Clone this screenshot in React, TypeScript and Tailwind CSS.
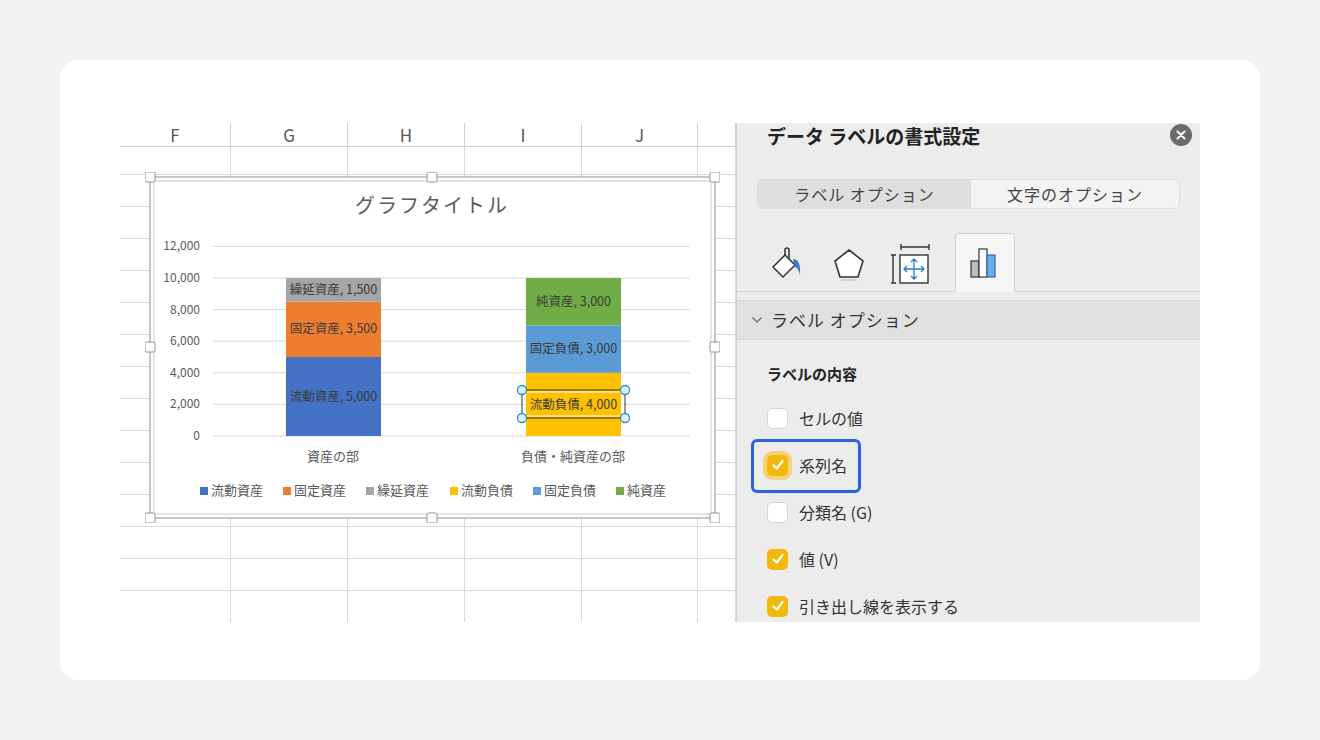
import React from "react";

const cols = [111, 117, 117, 117, 116, 38];
const colNames = ["F", "G", "H", "I", "J", ""];

function Check({ on, glow }: { on: boolean; glow?: boolean }) {
  return (
    <div className={`w-[21px] h-[21px] rounded-[5px] flex items-center justify-center ${on ? "bg-[#f2b80c]" : "bg-white border border-[#d6d6d6]"} ${glow ? "ring-4 ring-[#f5d27a]" : ""}`}>
      {on && (
        <svg width="14" height="14" viewBox="0 0 14 14"><path d="M2.5 7.5 L5.8 10.5 L11.5 3" stroke="white" strokeWidth="2.2" fill="none" strokeLinecap="round" strokeLinejoin="round" /></svg>
      )}
    </div>
  );
}

function Chart() {
  const y0 = 259;
  const s = 0.0158;
  const seg = (x: number, from: number, v: number, c: string, label: string, key: string) => {
    const top = y0 - (from + v) * s;
    const h = v * s;
    return (
      <g key={key}>
        <rect x={x} y={top} width={95} height={h} fill={c} />
        <text x={x + 47.5} y={top + h / 2 + 4} textAnchor="middle" fontSize="12.5" fill="#3a3a3a">{label}</text>
      </g>
    );
  };
  const ticks = [0, 2000, 4000, 6000, 8000, 10000, 12000];
  const legend = [
    ["流動資産", "#4472c4"], ["固定資産", "#ed7d31"], ["繰延資産", "#a5a5a5"],
    ["流動負債", "#ffc000"], ["固定負債", "#5b9bd5"], ["純資産", "#70ad47"],
  ];
  const handles = [[0, 0], [282, 0], [565, 0], [0, 170], [565, 170], [0, 341], [282, 341], [565, 341]];
  return (
    <svg className="absolute left-[25px] top-[49px]" width="575" height="351" viewBox="-5 -5 575 351" style={{ fontFamily: "'Noto Sans CJK JP', sans-serif" }}>
      <rect x="0" y="0" width="565" height="341" fill="white" stroke="#8f8f8f" strokeWidth="1" />
      <rect x="4" y="4" width="557" height="333" fill="none" stroke="#c8c8c8" strokeWidth="1" />
      <text x="282" y="36" textAnchor="middle" fontSize="20" fill="#595959" letterSpacing="2">グラフタイトル</text>
      {ticks.map((t) => (
        <g key={t}>
          <line x1="63" x2="540" y1={y0 - t * s} y2={y0 - t * s} stroke="#d9d9d9" />
          <text x="50" y={y0 - t * s + 4} textAnchor="end" fontSize="12" fill="#595959">{t.toLocaleString("en-US")}</text>
        </g>
      ))}
      {seg(136, 0, 5000, "#4472c4", "流動資産, 5,000", "a")}
      {seg(136, 5000, 3500, "#ed7d31", "固定資産, 3,500", "b")}
      {seg(136, 8500, 1500, "#a5a5a5", "繰延資産, 1,500", "c")}
      <rect x={376} y={y0 - 4000 * s} width={95} height={4000 * s} fill="#ffc000" />
      {seg(376, 4000, 3000, "#5b9bd5", "固定負債, 3,000", "e")}
      {seg(376, 7000, 3000, "#70ad47", "純資産, 3,000", "f")}
      <rect x="372" y="213" width="103" height="28" fill="none" stroke="#333" strokeWidth="1" />
      <rect x="374" y="215" width="99" height="24" fill="none" stroke="white" strokeWidth="1" />
      <text x="423.5" y="232" textAnchor="middle" fontSize="12.5" fill="#3a3a3a">流動負債, 4,000</text>
      {[[372, 213], [475, 213], [372, 241], [475, 241]].map(([x, y], i) => (
        <circle key={i} cx={x} cy={y} r="4.5" fill="#dff0fb" stroke="#2a8ad4" strokeWidth="1.3" />
      ))}
      <text x="183" y="284" textAnchor="middle" fontSize="13" fill="#595959">資産の部</text>
      <text x="423" y="284" textAnchor="middle" fontSize="13" fill="#595959">負債・純資産の部</text>
      {legend.map(([n, c], i) => {
        const x = [50, 133, 216, 300, 383, 466][i];
        return (
          <g key={n}>
            <rect x={x} y={310} width="8" height="8" fill={c} />
            <text x={x + 11} y={318} fontSize="13" fill="#595959">{n}</text>
          </g>
        );
      })}
      {handles.map(([x, y], i) => (
        <rect key={i} x={x - 5} y={y - 5} width="10" height="10" rx="1.5" fill="white" stroke="#8f8f8f" />
      ))}
    </svg>
  );
}

export default function App() {
  const rows = Array.from({ length: 15 });
  return (
    <div className="w-[1320px] h-[740px] bg-[#f2f1f3] p-[60px]" style={{ fontFamily: "'Noto Sans CJK JP', 'Noto Sans', sans-serif" }}>
      <div className="w-[1200px] h-[620px] bg-white rounded-[18px] pt-[63px] pl-[60px]">
        <div className="flex w-[1080px] h-[499px] overflow-hidden">
          <div className="relative w-[616px] shrink-0 bg-white">
            <div className="flex h-[24px] border-b border-[#d0d0d0]">
              {cols.map((w, i) => (
                <div key={i} style={{ width: w }} className="shrink-0 border-r border-[#d0d0d0] flex items-center justify-center text-[17px] text-[#555] font-['Liberation_Sans',sans-serif]">{colNames[i]}</div>
              ))}
            </div>
            {rows.map((_, r) => (
              <div key={r} className={`flex ${r === 0 ? "h-[28px]" : "h-[32px]"} border-b border-[#dadada]`}>
                {cols.map((w, i) => (
                  <div key={i} style={{ width: w }} className="shrink-0 border-r border-[#dadada]" />
                ))}
              </div>
            ))}
            <Chart />
          </div>
          <div className="flex-1 bg-[#ececec] border-l border-[#d0d0d0] relative">
            <div className="flex items-start justify-between pl-[30px] pr-[8px] pt-[1px]">
              <div className="text-[19px] font-bold text-[#222] leading-[24px]">データ ラベルの書式設定</div>
              <div className="w-[22px] h-[22px] rounded-full bg-[#6b6b6b] flex items-center justify-center">
                <svg width="10" height="10" viewBox="0 0 10 10"><path d="M1.5 1.5 L8.5 8.5 M8.5 1.5 L1.5 8.5" stroke="white" strokeWidth="2" strokeLinecap="round" /></svg>
              </div>
            </div>
            <div className="mx-[20px] mt-[31px] h-[30px] flex rounded-[6px] border border-[#dcdcdc] overflow-hidden text-[16px] text-[#444]">
              <div className="w-[213px] bg-[#dedede] flex items-center justify-center tracking-[1px]">ラベル オプション</div>
              <div className="flex-1 bg-[#f3f3f3] flex items-center justify-center tracking-[1px]">文字のオプション</div>
            </div>
            <div className="flex items-end h-[58px] mt-[25px] pl-[30px] gap-[22px] border-b border-[#d4d4d4]">
              <svg width="40" height="40" viewBox="0 0 40 40" className="mb-[6px]">
                <path d="M6 22 L18 10 L28 20 L16 32 Z" fill="white" stroke="#333" strokeWidth="1.5" />
                <path d="M18 10 L18 4 Q20 2 22 4 L22 14" fill="none" stroke="#333" strokeWidth="1.5" />
                <path d="M26 14 Q34 14 33 30 Q31 22 28 22 Z" fill="#2b7cd3" />
              </svg>
              <svg width="40" height="40" viewBox="0 0 40 40" className="mb-[6px]">
                <path d="M20 5 L34 16 L29 32 L11 32 L6 16 Z" fill="white" stroke="#333" strokeWidth="1.6" />
                <path d="M12 35 L28 35" stroke="#ccc" strokeWidth="1.5" />
              </svg>
              <svg width="40" height="44" viewBox="0 0 40 44" className="mb-[4px]">
                <path d="M10 4 L38 4 M10 1 L10 7 M38 1 L38 7 M2 12 L2 40 M0 12 L5 12 M0 40 L5 40" stroke="#333" strokeWidth="1.4" fill="none" />
                <rect x="9" y="12" width="28" height="28" fill="white" stroke="#333" strokeWidth="1.4" />
                <path d="M23 16 L23 36 M13 26 L33 26 M20 19 L23 16 L26 19 M20 33 L23 36 L26 33 M16 23 L13 26 L16 29 M30 23 L33 26 L30 29" stroke="#2b7cd3" strokeWidth="1.3" fill="none" />
              </svg>
              <div className="w-[60px] bg-[#f6f6f6] border border-b-0 border-[#d4d4d4] rounded-t-[4px] flex items-center justify-center -mb-[1px] ml-[2px] h-[59px]">
                <svg width="34" height="36" viewBox="0 0 34 36">
                  <rect x="3" y="16" width="8" height="16" fill="#bdbdbd" stroke="#333" strokeWidth="1.2" />
                  <rect x="11" y="4" width="8" height="28" fill="white" stroke="#333" strokeWidth="1.2" />
                  <rect x="19" y="10" width="8" height="22" fill="#6aaee8" stroke="#2b6cb3" strokeWidth="1.2" />
                </svg>
              </div>
            </div>
            <div className="mt-[8px] h-[40px] bg-[#e0e0e0] border-y border-[#d6d6d6] flex items-center pl-[14px] text-[17px] text-[#333] tracking-[1px]">
              <svg width="12" height="8" viewBox="0 0 12 8" className="mr-[8px]"><path d="M1.5 1.5 L6 6 L10.5 1.5" stroke="#777" strokeWidth="1.5" fill="none" /></svg>
              ラベル オプション
            </div>
            <div className="pl-[30px] pt-[23px] text-[15px] font-bold text-[#222]">ラベルの内容</div>
            <div className="pl-[30px] mt-[22px] flex flex-col gap-[26px] text-[16px] text-[#333]">
              <div className="flex items-center gap-[11px] h-[21px]"><Check on={false} /><span>セルの値</span></div>
              <div className="flex items-center gap-[11px] h-[21px] relative">
                <div className="absolute -left-[16px] -top-[16px] w-[110px] h-[54px] border-[3px] border-[#2a62e6] rounded-[6px]" />
                <Check on glow /><span>系列名</span>
              </div>
              <div className="flex items-center gap-[11px] h-[21px]"><Check on={false} /><span>分類名 (G)</span></div>
              <div className="flex items-center gap-[11px] h-[21px]"><Check on /><span>値 (V)</span></div>
              <div className="flex items-center gap-[11px] h-[21px]"><Check on /><span>引き出し線を表示する</span></div>
            </div>
          </div>
        </div>
      </div>
    </div>
  );
}
